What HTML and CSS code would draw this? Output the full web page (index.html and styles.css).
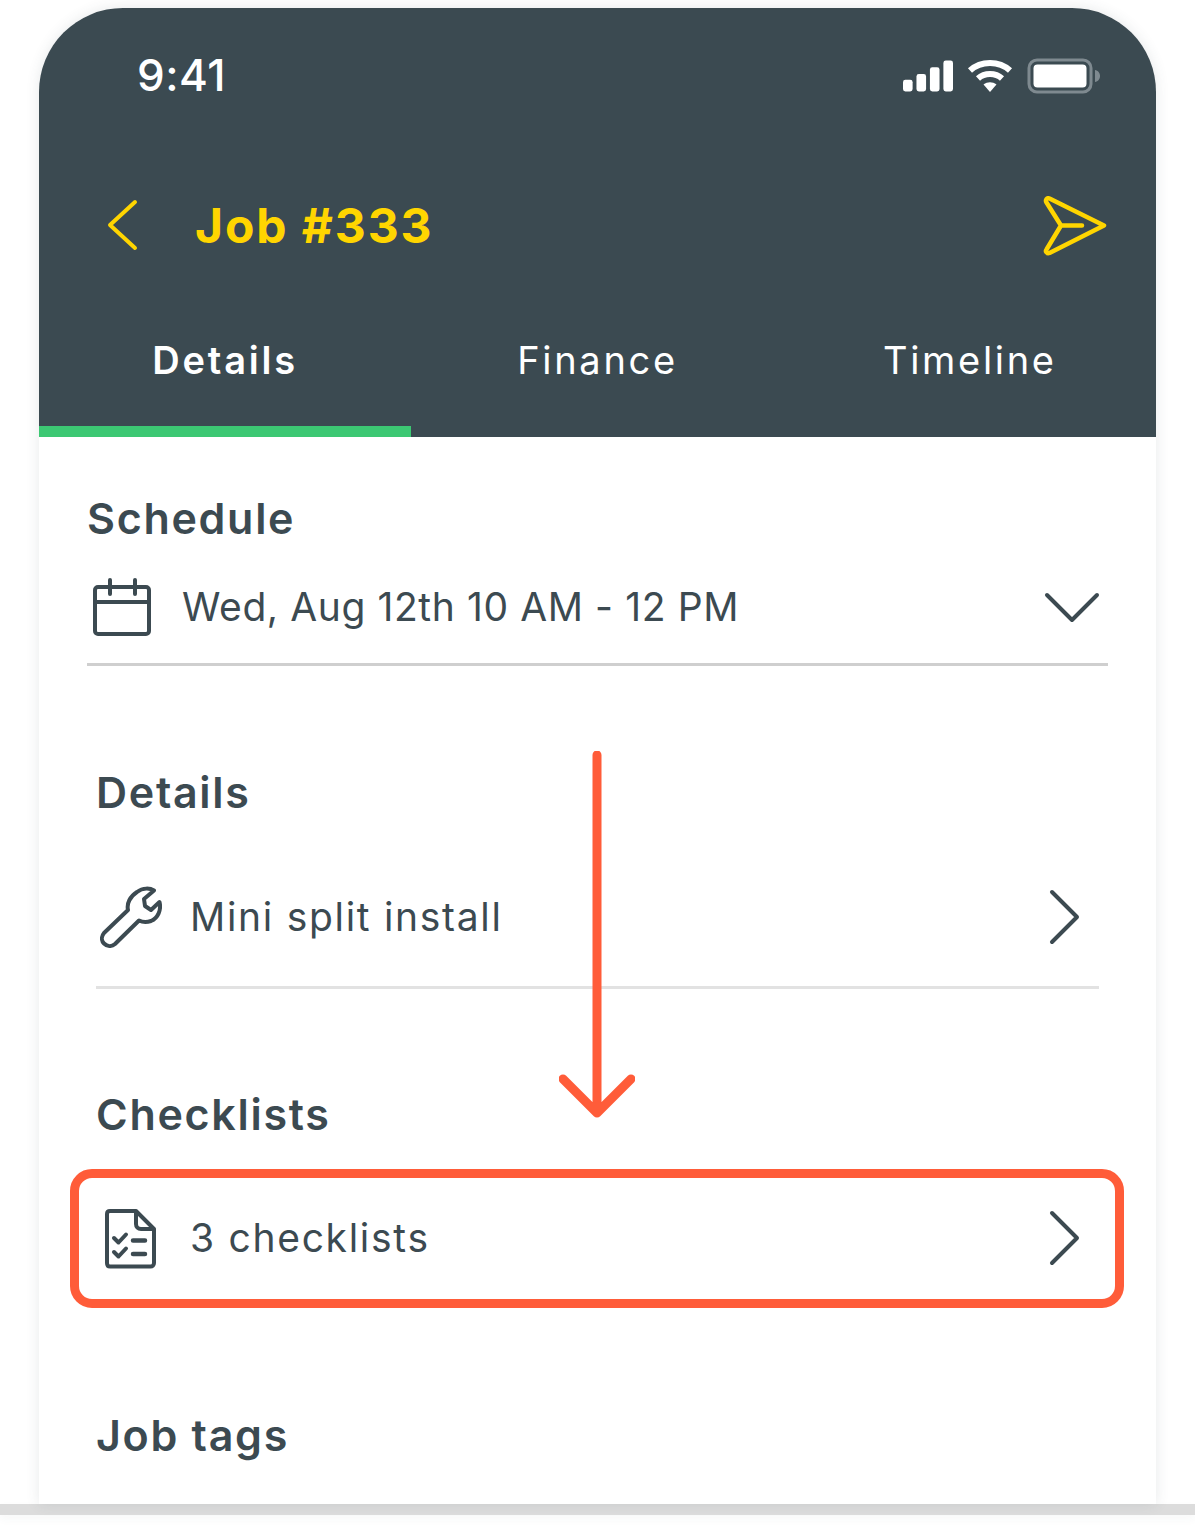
FILE: index.html
```html
<!DOCTYPE html>
<html lang="en">
<head>
<meta charset="utf-8">
<title>Job #333</title>
<link rel="stylesheet" href="styles.css">
</head>
<body>
<main class="phone">
  <header class="top">
    <div class="status">
      <span class="clock">9:41</span>
      <div class="status-icons">
        <svg class="signal" width="50" height="32" viewBox="0 0 52 32"><g fill="#fff"><rect x="0" y="20" width="10" height="12" rx="2.500"/><rect x="14" y="14" width="10" height="18" rx="2.500"/><rect x="28" y="7" width="10" height="25" rx="2.500"/><rect x="42" y="0" width="10" height="32" rx="2.500"/></g></svg>
        <svg class="wifi" width="46" height="34" viewBox="0 0 46 34"><g fill="none" stroke="#fff" stroke-width="6"><path d="M3 11.500C14 1.500 32 1.500 43 11.500"/><path d="M11 19.500C17.500 13.500 28.500 13.500 35 19.500"/></g><path d="M16.500 25.500C20.500 22.500 25.500 22.500 29.500 25.500L23 33Z" fill="#fff"/></svg>
        <svg class="battery" width="74" height="36" viewBox="0 0 74 36"><rect x="2" y="2" width="62" height="32" rx="8" fill="none" stroke="#7f8a90" stroke-width="3"/><rect x="6.500" y="6.500" width="53" height="23" rx="4" fill="#fff"/><path d="M68 12C71 12.500 73 15 73 18S71 23.500 68 24Z" fill="#7f8a90"/></svg>
      </div>
    </div>
    <div class="nav">
      <svg class="back" width="32" height="54" viewBox="0 0 32 54"><path d="M28 3 3 26 28 49" fill="none" stroke="#ffd500" stroke-width="4" stroke-linecap="round" stroke-linejoin="round"/></svg>
      <h1 class="title">Job #333</h1>
      <svg class="send" width="64" height="60" viewBox="0 0 64 60"><path d="M6.500 2.500 61 29.500 6.500 57C4 58 2 55.500 3.500 53.500L18 29.500 3.500 6.500C2 4 4 1.500 6.500 2.500ZM18 29.500H39" fill="none" stroke="#ffd500" stroke-width="4.500" stroke-linecap="round" stroke-linejoin="round"/></svg>
    </div>
    <nav class="tabs">
      <span class="tab tab-active">Details</span>
      <span class="tab">Finance</span>
      <span class="tab">Timeline</span>
    </nav>
  </header>
  <section class="schedule">
    <h2 class="heading">Schedule</h2>
    <div class="row row-schedule">
      <svg class="ico" width="60" height="60" viewBox="0 0 60 60"><g fill="none" stroke="#3c4a51" stroke-width="4" stroke-linecap="round" stroke-linejoin="round"><rect x="2" y="10" width="54" height="47" rx="3"/><path d="M2 25H56M17 3V17M42 3V17"/></g></svg>
      <span class="row-text row-text-date">Wed, Aug 12th 10 AM - 12 PM</span>
      <svg class="caret" width="56" height="32" viewBox="0 0 56 32"><path d="M3 4 28 29 53 4" fill="none" stroke="#3c4a51" stroke-width="4" stroke-linecap="round" stroke-linejoin="round"/></svg>
    </div>
  </section>
  <section class="details">
    <h2 class="heading">Details</h2>
    <div class="row row-details">
      <svg class="ico" width="62" height="62" viewBox="0 0 62 62"><path d="M37 6C43 1.500 50 2 54 4.500L44 13 45 20 51 24 59.500 16C61.500 24 58 32 51 35 46.500 36.500 42 36 39 34.500L15 58C11.500 61 7 60.500 4 57.500 1 54.500 1.500 50 4 47L28 24C26.500 17.500 30 10.500 37 6Z" fill="none" stroke="#3c4a51" stroke-width="4" stroke-linejoin="round"/></svg>
      <span class="row-text">Mini split install</span>
      <svg class="chev" width="32" height="56" viewBox="0 0 32 56"><path d="M4 3 29 28 4 53" fill="none" stroke="#3c4a51" stroke-width="4" stroke-linecap="round" stroke-linejoin="round"/></svg>
    </div>
  </section>
  <section class="checklists">
    <h2 class="heading">Checklists</h2>
    <div class="row row-check">
      <svg class="ico" width="54" height="62" viewBox="0 0 54 62"><g fill="none" stroke="#3c4a51" stroke-linecap="round" stroke-linejoin="round"><path d="M5 4H31L49 22V56C49 58 47.500 59.500 45.500 59.500H5C3 59.500 2 58 2 56V7C2 5 3 4 5 4Z" stroke-width="4"/><path d="M31 4.500V17C31 20 33 22 36 22H48.500" stroke-width="4"/><path d="M9 31 13.500 35.500 21 27.500M9 45 13.500 49.500 21 41.500" stroke-width="4"/><path d="M28 33.500H40M28 47H40" stroke-width="4.500"/></g></svg>
      <span class="row-text">3 checklists</span>
      <svg class="chev" width="32" height="56" viewBox="0 0 32 56"><path d="M4 3 29 28 4 53" fill="none" stroke="#3c4a51" stroke-width="4" stroke-linecap="round" stroke-linejoin="round"/></svg>
    </div>
    <div class="highlight"></div>
  </section>
  <section class="tags">
    <h2 class="heading">Job tags</h2>
  </section>
  <svg class="arrow" width="76" height="368" viewBox="0 0 76 368"><path d="M38 4V362M4 328 38 362 72 328" fill="none" stroke="#ff5c39" stroke-width="9" stroke-linecap="round" stroke-linejoin="round"/></svg>
</main>
<div class="footer-bar"></div>
</body>
</html>
```

FILE: styles.css
```css
* { box-sizing: border-box; }
html, body { margin: 0; padding: 0; }
body {
  width: 1195px;
  height: 1529px;
  background: #fff;
  overflow: hidden;
  font-family: "Inter", "Liberation Sans", sans-serif;
  color: #3c4a51;
}
h1, h2 { margin: 0; }
svg { display: block; flex: none; }

.phone {
  position: relative;
  width: 1117px;
  height: 1496px;
  margin: 8px 0 0 39px;
  background: #fff;
  border-radius: 84px 84px 0 0;
  box-shadow: 0 0 14px rgba(60, 74, 81, 0.12);
}
.top {
  height: 429px;
  background: #3b4a51;
  border-radius: 84px 84px 0 0;
  display: flex;
  flex-direction: column;
}
.status {
  height: 178px;
  padding: 36px 55px 0 98px;
  display: flex;
  justify-content: space-between;
  align-items: flex-start;
  flex: none;
}
.clock {
  color: #fff;
  font-size: 44px;
  line-height: 62px;
  font-weight: 500;
  letter-spacing: 0.5px;
}
.status-icons {
  display: flex;
  gap: 14px;
  align-items: center;
  padding-top: 14px;
}
.nav {
  height: 80px;
  padding: 0 49px 0 68px;
  display: flex;
  align-items: center;
  flex: none;
}
.title {
  flex: 1;
  margin-left: 56px;
  color: #ffd500;
  font-size: 48px;
  font-weight: 700;
  line-height: 80px;
  letter-spacing: 1.9px;
}
.tabs {
  display: grid;
  grid-template-columns: repeat(3, 1fr);
  height: 118px;
  flex: none;
  margin-top: auto;
}
.tab {
  color: #fff;
  text-align: center;
  font-size: 38px;
  line-height: 50px;
  padding-top: 16px;
  letter-spacing: 2.7px;
}
.tab-active {
  font-weight: 600;
  letter-spacing: 2.8px;
  border-bottom: 11px solid #3cc873;
}
.heading {
  font-size: 43px;
  line-height: 56px;
  font-weight: 600;
  letter-spacing: 1.7px;
  color: #3c4a51;
}
.row { display: flex; align-items: center; }
.row-text {
  flex: 1;
  font-size: 39px;
  line-height: 50px;
  letter-spacing: 1.7px;
}
.row-text-date { letter-spacing: 0.6px; }
.schedule { margin: 53px 48px 0; }
.row-schedule {
  height: 120px;
  padding: 5px 8px 0 6px;
  border-bottom: 3px solid #cfcfcf;
}
.row-schedule .row-text { margin-left: 29px; }
.details { margin: 98px 57px 0; }
.row-details {
  height: 141px;
  margin-top: 28px;
  padding: 0 19px 0 4px;
  border-bottom: 3px solid #e2e2e2;
}
.row-details .row-text { margin-left: 28px; }
.checklists { position: relative; margin: 97px 57px 0; }
.row-check {
  height: 138px;
  margin-top: 27px;
  padding: 0 19px 0 9px;
}
.row-check .row-text { margin-left: 31px; }
.highlight {
  position: absolute;
  left: -26px;
  right: -25px;
  top: 83px;
  bottom: -1px;
  border: 9px solid #ff5c39;
  border-radius: 22px;
}
.tags { margin: 100px 57px 0; }
.arrow {
  position: absolute;
  left: 520px;
  top: 743px;
}
.footer-bar {
  height: 11px;
  background: #dcdcdc;
  box-shadow: 0 4px 10px rgba(60, 74, 81, 0.04);
}
```
